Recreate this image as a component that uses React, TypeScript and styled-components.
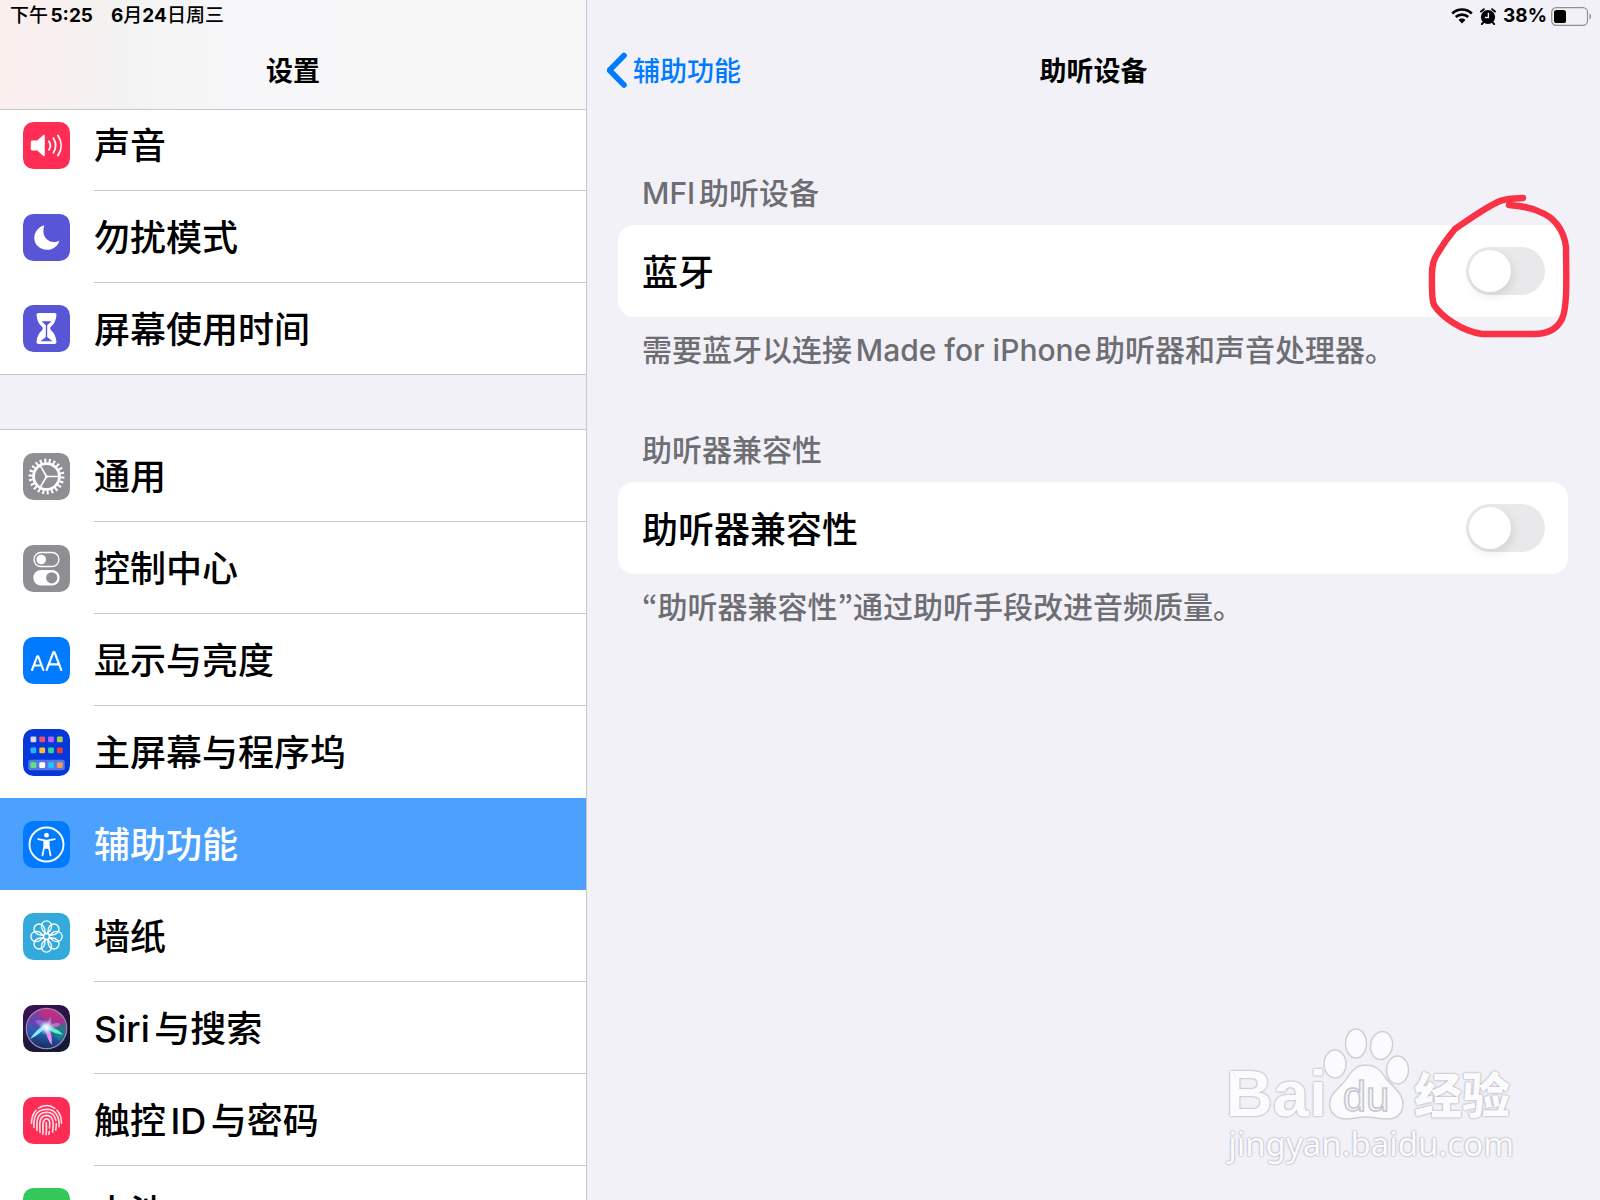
import React, { useState } from "react";
import styled, { createGlobalStyle } from "styled-components";

const colors = {
  canvas: "#f2f1f8",
  line: "#c8c7cc",
  blue: "#007aff",
  selected: "#4ca1ff",
  muted: "#6d6d72",
  track: "#e9e9eb",
  marker: "#fa3246",
};

const GlobalStyle = createGlobalStyle`
  *, *::before, *::after { box-sizing: border-box; }
  body {
    margin: 0;
    background: ${colors.canvas};
    color: #000;
    font-family: Inter, "Noto Sans CJK SC", sans-serif;
    text-autospace: normal;
  }
`;

const Screen = styled.div`
  display: grid;
  grid-template-columns: minmax(0, 587fr) minmax(0, 1013fr);
  height: 100vh;
  overflow: hidden;
`;

const Sidebar = styled.aside`
  display: flex;
  flex-direction: column;
  min-height: 0;
  overflow: hidden;
  border-right: 1px solid ${colors.line};
`;

const SidebarHeader = styled.header`
  position: relative;
  z-index: 1;
  flex: none;
  border-bottom: 1px solid ${colors.line};
  background: linear-gradient(90deg, #fbefee 0, #f8f0f0 12%, #f3f2f2 20%, #f5f5f6 28%, #f7f7f9 45%, #f7f7f7 100%);
`;

const StatusBar = styled.div<{ $end?: boolean }>`
  display: flex;
  align-items: center;
  justify-content: ${(p) => (p.$end ? "flex-end" : "flex-start")};
  gap: ${(p) => (p.$end ? "4px" : "18px")};
  height: 30px;
  padding: ${(p) => (p.$end ? "2px 8px 0" : "2px 10px 0")};
  font-size: 19px;
  line-height: 28px;
  font-weight: 500;

  b { font-weight: 700; }
`;

const StatusDate = styled.span`
  text-autospace: no-autospace;
`;

const StatusGroup = styled.span`
  display: flex;
  align-items: center;
  gap: 7px;
`;

const NavBar = styled.div`
  display: grid;
  grid-template-columns: 1fr auto 1fr;
  align-items: center;
  height: 80px;
  padding: 0 20px;
`;

const SidebarNavBar = styled(NavBar)`
  height: 79px;
`;

const Title = styled.h1`
  grid-column: 2;
  margin: 0;
  padding-top: 4px;
  font-size: 27px;
  line-height: 40px;
  font-weight: 600;
`;

const BackLink = styled.a`
  display: flex;
  align-items: center;
  gap: 6px;
  justify-self: start;
  color: ${colors.blue};
  font-size: 27px;
  line-height: 40px;
  font-weight: 500;
  text-decoration: none;

  span { padding-top: 4px; }
`;

const Menu = styled.nav`
  display: flex;
  flex-direction: column;
  gap: 54px;
  margin-top: -11px;
`;

const MenuLink = styled.a<{ $selected: boolean }>`
  display: flex;
  align-items: center;
  gap: 24px;
  height: 92px;
  padding-left: 23px;
  color: ${(p) => (p.$selected ? "#fff" : "#000")};
  background: ${(p) => (p.$selected ? colors.selected : "#fff")};
  text-decoration: none;

  svg { flex: none; }
`;

const MenuGroup = styled.ul<{ $first?: boolean }>`
  margin: 0;
  padding: 0;
  list-style: none;
  background: #fff;
  border-top: ${(p) => (p.$first ? "0" : `1px solid ${colors.line}`)};
  border-bottom: 1px solid ${colors.line};

  li:last-child ${MenuLink} { height: 91px; }
`;

const MenuLabel = styled.span<{ $line: boolean }>`
  flex: 1;
  align-self: stretch;
  border-bottom: 1px solid ${(p) => (p.$line ? colors.line : "transparent")};
  font-size: 36px;
  line-height: 94px;
  font-weight: 500;
  white-space: nowrap;
`;

const Detail = styled.main`
  position: relative;
  min-width: 0;
`;

const Sections = styled.div`
  display: flex;
  flex-direction: column;
  gap: 60px;
  padding: 63px 32px 0 31px;
`;

const SectionTitle = styled.h2`
  margin: 0 24px 12px;
  color: ${colors.muted};
  font-size: 30px;
  line-height: 40px;
  font-weight: 500;
`;

const SectionNote = styled.p`
  margin: 13px 24px 0;
  color: ${colors.muted};
  font-size: 30px;
  line-height: 40px;
  font-weight: 500;
`;

const Quote = styled.span`
  font-family: "Noto Sans CJK KR", sans-serif;
  line-height: 1;
`;

const Card = styled.div`
  position: relative;
  display: flex;
  align-items: center;
  justify-content: space-between;
  height: 92px;
  padding: 0 23px 0 24px;
  border-radius: 16px;
  background: #fff;
`;

const CardLabel = styled.label`
  padding-top: 3px;
  font-size: 36px;
  line-height: 48px;
  font-weight: 500;
`;

const Switch = styled.input`
  appearance: none;
  width: 79px;
  height: 48px;
  margin: 0;
  padding: 3px;
  border-radius: 24px;
  background: ${colors.track};
  cursor: pointer;

  &::before {
    content: "";
    display: block;
    width: 42px;
    height: 42px;
    border-radius: 50%;
    background: #fff;
    box-shadow: 2px 4px 10px rgba(0, 0, 0, 0.1);
  }

  &:checked { background: #34c759; }
  &:checked::before { margin-left: 31px; }
`;

const Scribble = styled.svg`
  position: absolute;
  top: -35px;
  right: -6px;
  pointer-events: none;
`;

const Watermark = styled.div`
  position: absolute;
  right: 86px;
  bottom: 36px;
  display: flex;
  flex-direction: column;
  align-items: flex-end;
  gap: 4px;
  color: #fbfbfe;
  text-shadow: 0 0 2px #a9a9b1, 0 0 2px #b4b4bc;
  pointer-events: none;
`;

const Brand = styled.div`
  display: flex;
  align-items: flex-end;
  padding-right: 4px;

  svg {
    margin-left: -4px;
    text-shadow: none;
  }
`;

const BrandLatin = styled.span`
  font: 700 65px/52px "Liberation Sans", sans-serif;
`;

const BrandChinese = styled.span`
  font: 900 48px/56px "Noto Sans CJK SC", sans-serif;
`;

const BrandUrl = styled.span`
  font: 400 33px/40px "Noto Sans", sans-serif;
`;

function Tile({ fill, children }: { fill: string; children?: React.ReactNode }) {
  return (
    <svg width="47" height="47" viewBox="0 0 47 47" aria-hidden="true">
      <rect width="47" height="47" rx="10.5" fill={fill} />
      {children}
    </svg>
  );
}

const SoundIcon = () => (
  <Tile fill="#ff2d55">
    <path d="M9.5 18.5h4.8l6-5.4c.6-.5 1.5-.2 1.5.7v19.4c0 .9-.9 1.2-1.5.7l-6-5.4H9.5c-1 0-1.7-.7-1.7-1.7v-6.6c0-1 .7-1.7 1.7-1.7z" fill="#fff" />
    <g fill="none" stroke="#fff" strokeWidth="1.8" strokeLinecap="round">
      <path d="M26 19.2c1.6 2.6 1.6 6 0 8.6" />
      <path d="M30.4 16.3c2.8 4.4 2.8 10 0 14.4" />
      <path d="M35 13.4c4.1 6.2 4.1 14 0 20.2" />
    </g>
  </Tile>
);

const MoonIcon = () => (
  <Tile fill="#5856d6">
    <path d="M21.4 11.2C15.4 12.8 11.3 18 11.3 24c0 6.7 5.5 11.7 12.5 11.7 6 0 11.2-3.5 12.6-9.3-1.8 1.3-4 1.8-6.1 1.6-5.6-.4-9.7-4.8-9.9-10.3 0-2.3.2-4.5 1-6.5z" fill="#fff" />
  </Tile>
);

const HourglassIcon = () => (
  <Tile fill="#5856d6">
    <path d="M15.6 8h15.8c1.5 0 2.3 1 2 2.7-.7 5-2.3 8.5-5.2 10.8-1.3 1.2-1.3 2.8 0 4 2.9 2.3 4.5 5.8 5.2 10.8.3 1.7-.5 2.7-2 2.7H15.6c-1.5 0-2.3-1-2-2.7.7-5 2.3-8.5 5.2-10.8 1.3-1.2 1.3-2.8 0-4-2.9-2.3-4.5-5.8-5.2-10.8-.3-1.7.5-2.7 2-2.7z" fill="#fff" />
    <path d="M18.5 16.3h10l-4.3 4v11.8l5.3 4.1h-12l5.3-4.1V20.3z" fill="#5856d6" />
  </Tile>
);

const GearIcon = () => (
  <Tile fill="#8e8e93">
    <g fill="none" stroke="#fff">
      <circle cx="23.5" cy="23.5" r="15.8" strokeWidth="4.2" pathLength={44} strokeDasharray="0.9 1.1" />
      <circle cx="23.5" cy="23.5" r="12.9" strokeWidth="2.8" />
      <path d="M23.5 23.5H36M23.5 23.5l-6.3-10.9M23.5 23.5l-6.3 10.9" strokeWidth="1.6" />
    </g>
    <circle cx="23.5" cy="23.5" r="1.6" fill="#fff" />
  </Tile>
);

const ControlIcon = () => (
  <Tile fill="#8e8e93">
    <rect x="11" y="7.5" width="25" height="14" rx="7" fill="none" stroke="#fff" strokeWidth="1.4" />
    <circle cx="18.2" cy="14.5" r="4.8" fill="#fff" />
    <rect x="10.3" y="25" width="26.4" height="15.5" rx="7.7" fill="#fff" />
    <circle cx="28.7" cy="32.8" r="5.6" fill="#8e8e93" />
  </Tile>
);

const DisplayIcon = () => (
  <Tile fill={colors.blue}>
    <g fill="none" stroke="#fff" strokeWidth="2.1" strokeLinecap="round" strokeLinejoin="round">
      <path d="M9 33l5.3-13.8h.8L20.3 33M10.7 28.5h7.9" />
      <path d="M23.6 33l6.9-18h.9l6.9 18M26 27.4h10" />
    </g>
  </Tile>
);

const appDots = [
  ["#d9d5ec", "#f0506e", "#b266ff", "#a9cf4e"],
  ["#22b5ff", "#fbbd2e", "#35cfa0", "#ee3a3a"],
  ["#5fe37a", "#ffffff", "#22c3ff", "#f79a4d"],
];
const dotRows = [7.5, 18.5, 33.2];

const HomeIcon = () => (
  <Tile fill="#0438d8">
    <rect x="5.2" y="30.7" width="36.6" height="10.6" rx="2.5" fill="#5577e6" />
    {appDots.map((row, r) =>
      row.map((c, i) => (
        <rect key={`${r}-${i}`} x={7.5 + i * 8.8} y={dotRows[r]} width="5.8" height="5.8" rx="1.2" fill={c} />
      ))
    )}
  </Tile>
);

const AccessIcon = () => (
  <Tile fill={colors.blue}>
    <circle cx="23.5" cy="23.5" r="17" fill="none" stroke="#fff" strokeWidth="1.9" />
    <circle cx="23.5" cy="14.2" r="2.4" fill="#fff" />
    <path d="M15.2 18.2l6.2 1.2v5.2l-1.9 9.7M31.8 18.2l-6.2 1.2v5.2l1.9 9.7" fill="none" stroke="#fff" strokeWidth="1.8" strokeLinecap="round" strokeLinejoin="round" />
    <path d="M20.8 18.7h5.4V25l-.7 2.8h-4L20.8 25z" fill="#fff" />
  </Tile>
);

const WallpaperIcon = () => (
  <Tile fill="#34aadc">
    <g fill="none" stroke="#fff" strokeWidth="1.3">
      {Array.from({ length: 8 }, (_, i) => (
        <path
          key={i}
          transform={`rotate(${i * 45} 23.5 23.5)`}
          d="M23.5 20.6c-2.9-1.6-5.1-4.2-5.1-7.6a5.1 5.1 0 0 1 10.2 0c0 3.4-2.2 6-5.1 7.6z"
        />
      ))}
      <circle cx="23.5" cy="23.5" r="2.9" />
    </g>
  </Tile>
);

const SiriIcon = () => (
  <Tile fill="url(#siriBack)">
    <defs>
      <linearGradient id="siriBack" x1="0" y1="0" x2="0.6" y2="1">
        <stop offset="0" stopColor="#3c1054" />
        <stop offset="1" stopColor="#141a33" />
      </linearGradient>
      <linearGradient id="siriOrb" x1="0.6" y1="0" x2="0.4" y2="1">
        <stop offset="0" stopColor="#d42a7c" />
        <stop offset="0.4" stopColor="#8b3a9a" />
        <stop offset="0.6" stopColor="#2a63b0" />
        <stop offset="1" stopColor="#14285e" />
      </linearGradient>
      <radialGradient id="siriGlow">
        <stop offset="0" stopColor="#fff" />
        <stop offset="0.4" stopColor="#d8f2ff" stopOpacity="0.8" />
        <stop offset="1" stopColor="#7fd0ff" stopOpacity="0" />
      </radialGradient>
    </defs>
    <circle cx="23.5" cy="23.5" r="20.2" fill="url(#siriOrb)" stroke="#9a8bb5" strokeWidth="1.2" />
    <path d="M4.5 20c1-7 6-12 11-13.500 2 6 5 12 8 16.500-5 4-10 8-15 10-3-3-4.500-8-4-13z" fill="#3e4fc0" opacity="0.5" />
    <path d="M24 23l18-4c1 7-1 13-5 17z" fill="#128a7c" opacity="0.75" />
    <path d="M12 16c5-2.500 11 0 12 6-4 1-9-1-12-6z" fill="#b46be0" opacity="0.7" />
    <path d="M23 22c1-5 3-8 5-10 .5 4 0 8-3 11zM26 21c4-3 8-4 12-2-3 3-7 4-12 4z" fill="#e07ad0" opacity="0.7" />
    <path d="M24 20.5c-4 5.5-9.500 10-17 13.500 4-6 9.500-11.500 15.500-15z" fill="#7df0ff" />
    <path d="M24 21c6 1 12 4 16 8.500-7-.5-12-3-16.500-6.500z" fill="#5ff0c8" />
    <path d="M22 23c1 6 3 12 6.500 17 1-6 0-12-4-18z" fill="#ee8cf0" />
    <circle cx="23.5" cy="22.5" r="8" fill="url(#siriGlow)" />
  </Tile>
);

const TouchIcon = () => (
  <Tile fill="#ff2d55">
    <g fill="none" stroke="#ffe3e8" strokeWidth="1.6" strokeLinecap="round">
      <path d="M15.500 11.200c5-3.600 11.500-3.600 16.300.1" />
      <path d="M8.500 26.500c-.1-5.200 1.300-9.600 4.600-13.200M34 13.200c3 3.400 4.600 8 4.500 13" />
      <path d="M11 30.500c-.4-8.500.5-18 12.500-18.300 9.500 0 13 7.800 12.600 17.500" />
      <path d="M14 33.500c-.4-9-.8-17.600 9.500-18.200 5 0 8.500 3.300 9.400 8.200M33.300 26.500c0 2.300-.2 4.400-.6 6.500" />
      <path d="M17 35.500c0-7-2-16.500 6.500-17.100 8 .3 7 9.600 6 16.800" />
      <path d="M20 37.300c.4-6-1.800-15 3.500-15.600 4 .4 3.400 5.300 3 9.300M26.300 34.500l-.4 2.800" />
      <path d="M23.300 25.500c.3 4 .2 8-.1 12.300" />
    </g>
  </Tile>
);

const BatteryTileIcon = () => (
  <Tile fill="#34c759">
    <rect x="8" y="16" width="28" height="15" rx="4" fill="#fff" />
    <path d="M38 20.500c2 .6 2 5.400 0 6z" fill="#fff" />
  </Tile>
);

const WifiIcon = () => (
  <svg width="22" height="16" viewBox="0 0 22 16" aria-label="Wi-Fi">
    <g fill="none" stroke="#000" strokeWidth="2.7">
      <path d="M1.200 5.400c5.500-5.200 14.100-5.200 19.600 0" />
      <path d="M4.800 9.100c3.500-3.300 8.900-3.300 12.400 0" />
    </g>
    <path d="M7.600 11.900c1.900-1.900 4.900-1.900 6.800 0L11 15.600z" />
  </svg>
);

const AlarmIcon = () => (
  <svg width="16" height="17" viewBox="0 0 16 17" aria-label="闹钟">
    <circle cx="8" cy="9" r="7.1" />
    <path d="M1 3.600L3.900 1.200M15 3.600l-2.900-2.400M3.300 14.300l-1.500 1.900M12.700 14.300l1.500 1.900" stroke="#000" strokeWidth="1.9" strokeLinecap="round" />
    <path d="M8.400 4.800v4.700H4.900" fill="none" stroke={colors.canvas} strokeWidth="1.4" />
  </svg>
);

const BatteryIcon = () => (
  <svg width="41" height="19" viewBox="0 0 41 19" aria-label="电池">
    <rect x="0.7" y="0.7" width="35.8" height="17.6" rx="4.6" fill="none" stroke="#8f8f94" strokeWidth="1.2" />
    <rect x="3" y="3" width="12" height="13" rx="2.6" />
    <path d="M38.500 6.500c2 .8 2 5.200 0 6z" fill="#8f8f94" />
  </svg>
);

const Paw = () => (
  <svg width="91" height="92" viewBox="0 0 91 92" aria-hidden="true">
    <g fill="#fbfbfe" stroke="#cfcfd6" strokeWidth="1.5">
      <ellipse cx="12" cy="36" rx="11" ry="14" />
      <ellipse cx="33" cy="15.500" rx="10.500" ry="14.500" />
      <ellipse cx="58.500" cy="17.500" rx="11" ry="14" transform="rotate(10 58.500 17.500)" />
      <ellipse cx="74.500" cy="42" rx="11" ry="14" />
      <path d="M43 37c9 0 15 5 19 12 5 8 18 15 18 27 0 9-6 15-15 15-9 0-14-2-22-2s-12 2-20 2C13 91 6.500 84 6.500 76 6.500 64 19 59 24 50c5-8 10-13 19-13z" />
    </g>
    <text x="43" y="83" textAnchor="middle" fontFamily="Liberation Sans, sans-serif" fontSize="42" fill="#f4f4f9" stroke="#c6c6ce" strokeWidth="1.5">
      du
    </text>
  </svg>
);

type Entry = { label: string; icon: React.FC };

const firstGroup: Entry[] = [
  { label: "声音", icon: SoundIcon },
  { label: "勿扰模式", icon: MoonIcon },
  { label: "屏幕使用时间", icon: HourglassIcon },
];

const secondGroup: Entry[] = [
  { label: "通用", icon: GearIcon },
  { label: "控制中心", icon: ControlIcon },
  { label: "显示与亮度", icon: DisplayIcon },
  { label: "主屏幕与程序坞", icon: HomeIcon },
  { label: "辅助功能", icon: AccessIcon },
  { label: "墙纸", icon: WallpaperIcon },
  { label: "Siri与搜索", icon: SiriIcon },
  { label: "触控ID与密码", icon: TouchIcon },
  { label: "电池", icon: BatteryTileIcon },
];

const current = "辅助功能";

function MenuList({ items, first }: { items: Entry[]; first?: boolean }) {
  return (
    <MenuGroup $first={first}>
      {items.map(({ label, icon: Icon }, i) => {
        const selected = label === current;
        const last = i === items.length - 1;
        const beforeSelected = items[i + 1]?.label === current;
        return (
          <li key={label}>
            <MenuLink href="#" $selected={selected} aria-current={selected ? "page" : undefined}>
              <Icon />
              <MenuLabel $line={!last && !selected && !beforeSelected}>{label}</MenuLabel>
            </MenuLink>
          </li>
        );
      })}
    </MenuGroup>
  );
}

type SettingProps = {
  id: string;
  title: string;
  label: string;
  note: React.ReactNode;
  children?: React.ReactNode;
};

function Setting({ id, title, label, note, children }: SettingProps) {
  const [on, setOn] = useState(false);
  return (
    <section>
      <SectionTitle>{title}</SectionTitle>
      <Card>
        <CardLabel htmlFor={id}>{label}</CardLabel>
        <Switch id={id} type="checkbox" role="switch" checked={on} onChange={() => setOn(!on)} />
        {children}
      </Card>
      <SectionNote>{note}</SectionNote>
    </section>
  );
}

export default function App() {
  return (
    <>
      <GlobalStyle />
      <Screen>
        <Sidebar>
          <SidebarHeader>
            <StatusBar>
              <span>下午<b>5:25</b></span>
              <StatusDate><b>6</b>月<b>24</b>日周三</StatusDate>
            </StatusBar>
            <SidebarNavBar>
              <Title as="h2">设置</Title>
            </SidebarNavBar>
          </SidebarHeader>
          <Menu>
            <MenuList items={firstGroup} first />
            <MenuList items={secondGroup} />
          </Menu>
        </Sidebar>
        <Detail>
          <StatusBar $end>
            <StatusGroup>
              <WifiIcon />
              <AlarmIcon />
              <b>38%</b>
            </StatusGroup>
            <BatteryIcon />
          </StatusBar>
          <NavBar>
            <BackLink href="#">
              <svg width="20" height="36" viewBox="0 0 20 36" aria-hidden="true">
                <path d="M17 3.500L2.500 18.300 17 33" fill="none" stroke={colors.blue} strokeWidth="5.6" strokeLinecap="round" strokeLinejoin="round" />
              </svg>
              <span>辅助功能</span>
            </BackLink>
            <Title>助听设备</Title>
          </NavBar>
          <Sections>
            <Setting id="bluetooth" title="MFI助听设备" label="蓝牙" note="需要蓝牙以连接Made for iPhone助听器和声音处理器。">
              <Scribble width="150" height="150" viewBox="0 0 150 150" aria-hidden="true">
                <path
                  d="M99 8C91 9 84 8 76 11C62 17 47 28 31 39C25 46 17 57 11 68C7 76 8 86 8 97C8 104 8 110 10 115C17 126 37 141 58 144H110C124 144 133 139 138 129C144 117 142 80 142 57C140 40 130 27 116 22C106 17 96 16 85 15"
                  fill="none"
                  stroke={colors.marker}
                  strokeWidth="6.4"
                  strokeLinecap="round"
                  strokeLinejoin="round"
                />
              </Scribble>
            </Setting>
            <Setting
              id="compatibility"
              title="助听器兼容性"
              label="助听器兼容性"
              note={<><Quote>“</Quote>助听器兼容性<Quote>”</Quote>通过助听手段改进音频质量。</>}
            />
          </Sections>
          <Watermark>
            <Brand>
              <BrandLatin>Bai</BrandLatin>
              <Paw />
              <BrandChinese>经验</BrandChinese>
            </Brand>
            <BrandUrl>jingyan.baidu.com</BrandUrl>
          </Watermark>
        </Detail>
      </Screen>
    </>
  );
}
